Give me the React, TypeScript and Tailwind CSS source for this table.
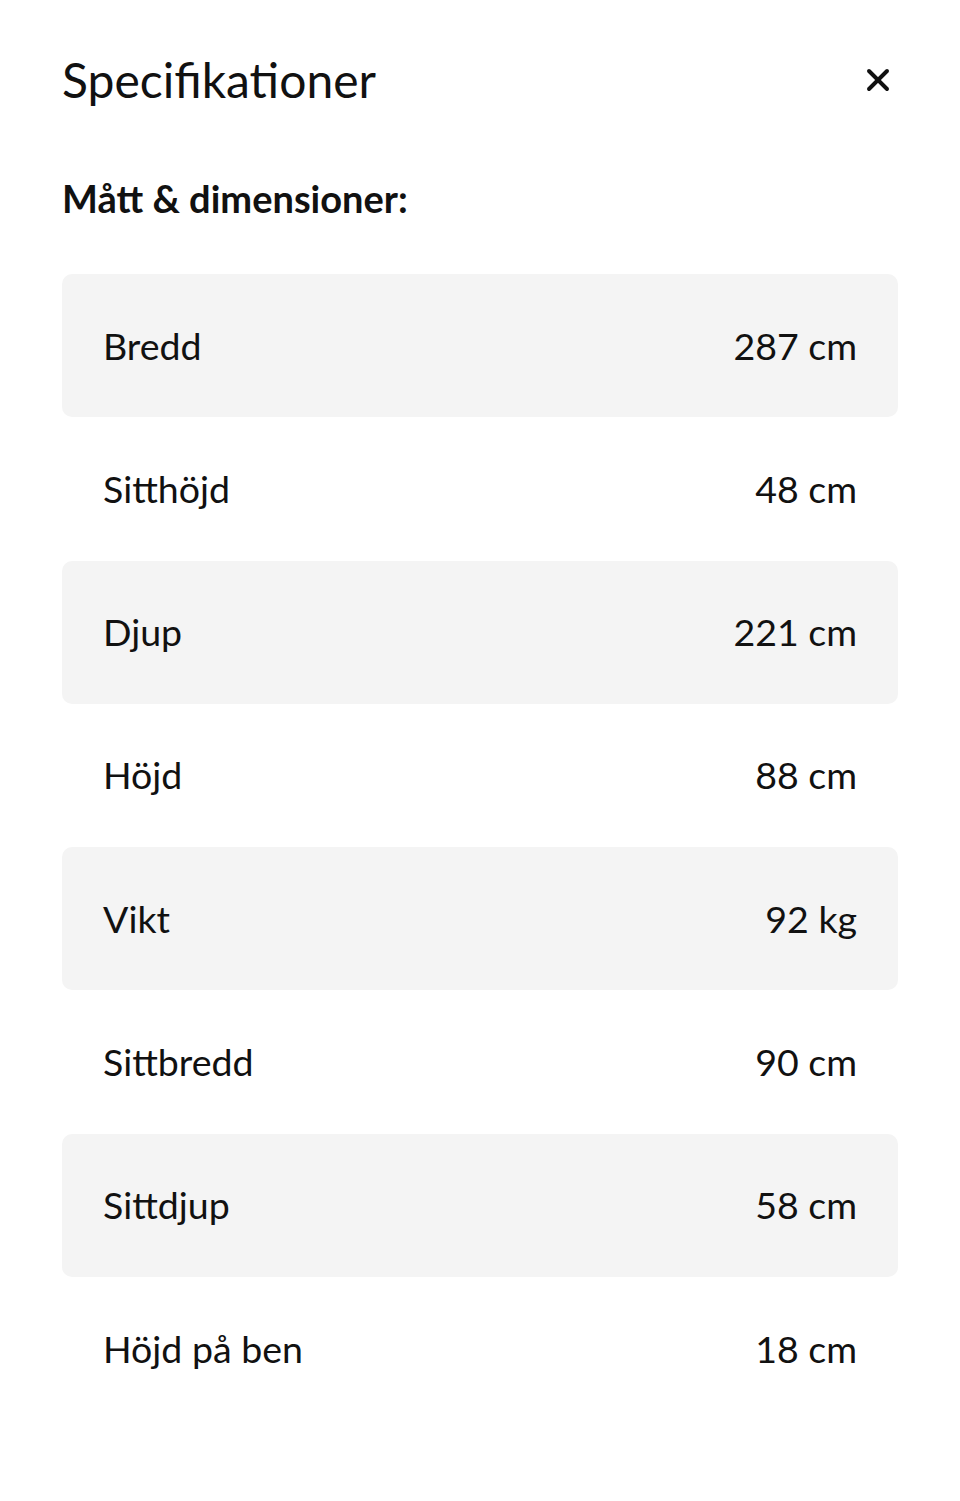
import { X } from "lucide-react";

const specs = [
	{ label: "Bredd", value: "287 cm" },
	{ label: "Sitthöjd", value: "48 cm" },
	{ label: "Djup", value: "221 cm" },
	{ label: "Höjd", value: "88 cm" },
	{ label: "Vikt", value: "92 kg" },
	{ label: "Sittbredd", value: "90 cm" },
	{ label: "Sittdjup", value: "58 cm" },
	{ label: "Höjd på ben", value: "18 cm" },
];

export default function App() {
	return (
		<div
			className="min-h-[1501px] bg-white px-[62px] text-[#111]"
			style={{ fontFamily: "Lato, 'Noto Sans', sans-serif" }}
		>
			<div className="flex items-center justify-between pt-[50px]">
				<h2 className="text-[48px] leading-[60px]">Specifikationer</h2>
				<button className="mr-[2px] text-[#111]">
					<X size={36} strokeWidth={2.6} />
				</button>
			</div>
			<h3 className="mt-[62px] text-[38px] font-bold leading-[52px]">
				Mått &amp; dimensioner:
			</h3>
			<div className="mt-[50px]">
				{specs.map((s, i) => (
					<div
						key={s.label}
						className={
							"flex h-[143.3px] items-center justify-between rounded-[10px] px-[41px] text-[37.5px] " +
							(i % 2 === 0 ? "bg-[#f4f4f4]" : "")
						}
					>
						<span>{s.label}</span>
						<span>{s.value}</span>
					</div>
				))}
			</div>
		</div>
	);
}
